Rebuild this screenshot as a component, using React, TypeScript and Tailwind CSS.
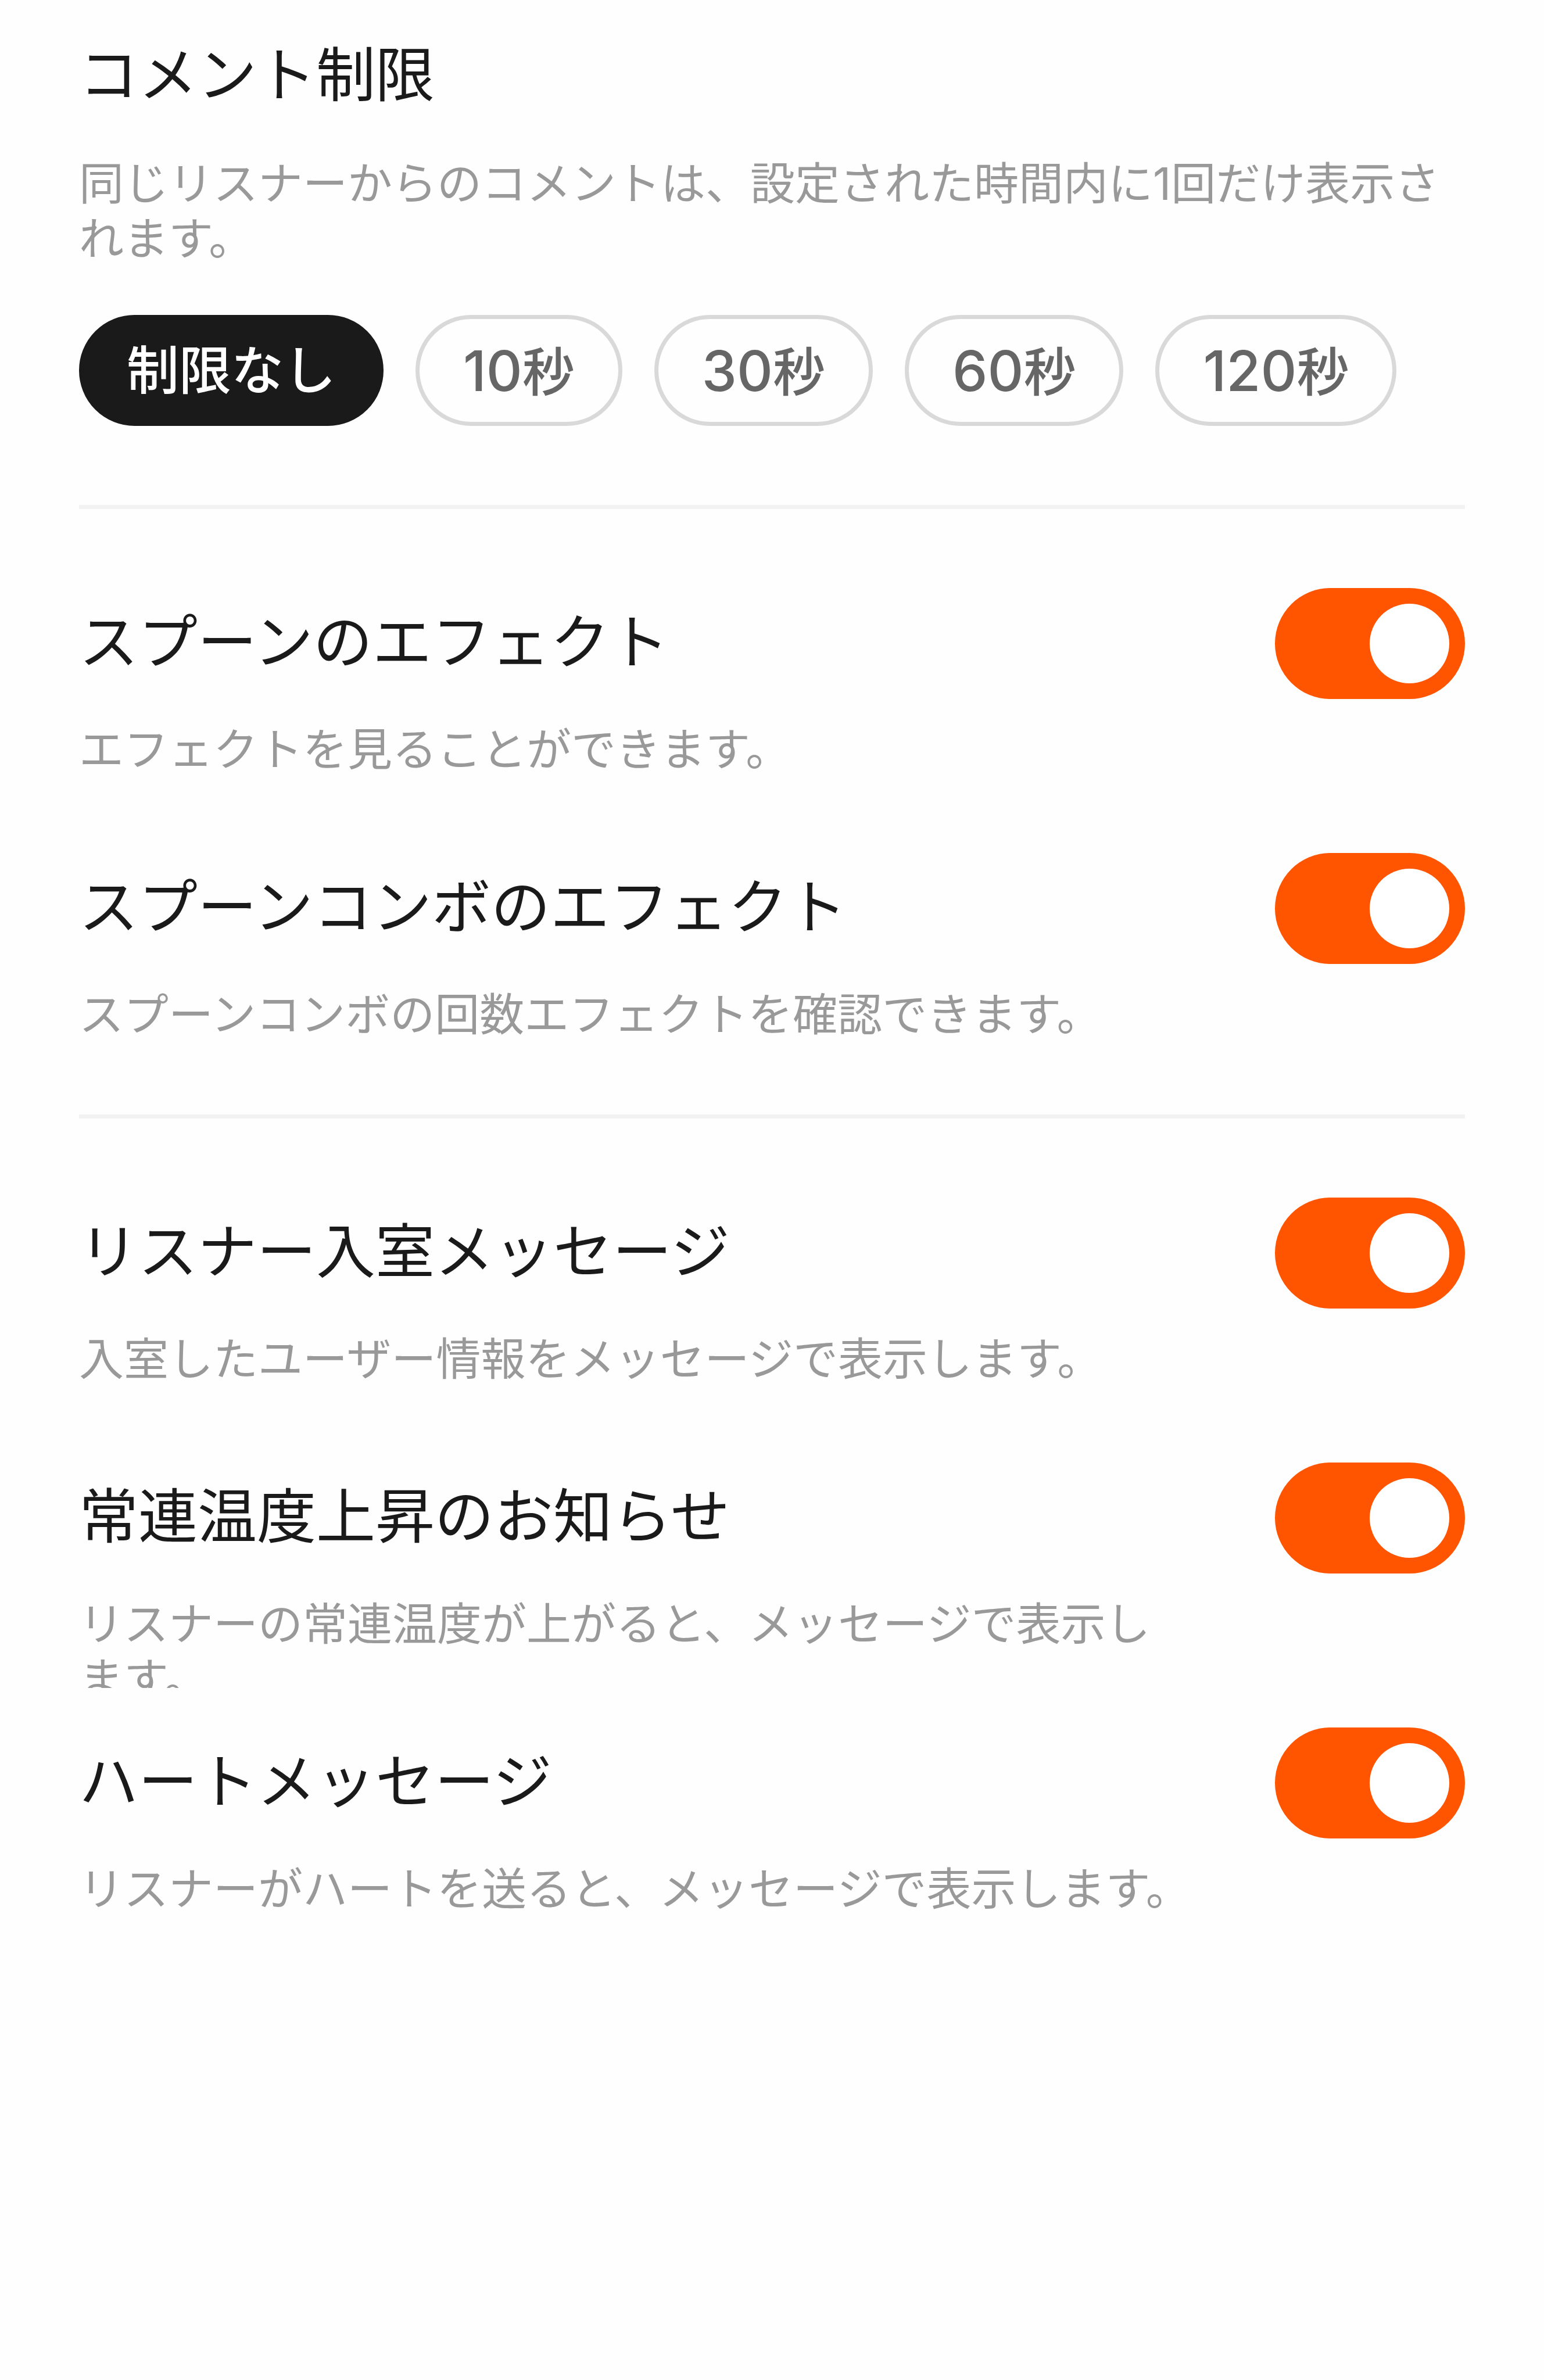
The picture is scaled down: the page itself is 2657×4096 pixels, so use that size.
import { useState } from "react";
import clsx from "clsx";

const limits = [
  { id: "none", amount: "", label: "制限なし" },
  { id: "10", amount: "10", label: "秒" },
  { id: "30", amount: "30", label: "秒" },
  { id: "60", amount: "60", label: "秒" },
  { id: "120", amount: "120", label: "秒" },
];

const effectSettings = [
  {
    id: "spoon-effect",
    title: "スプーンのエフェクト",
    description: "エフェクトを見ることができます。",
  },
  {
    id: "combo-effect",
    title: "スプーンコンボのエフェクト",
    description: "スプーンコンボの回数エフェクトを確認できます。",
  },
];

const messageSettings = [
  {
    id: "enter-message",
    title: "リスナー入室メッセージ",
    description: "入室したユーザー情報をメッセージで表示します。",
  },
  {
    id: "temperature-message",
    title: "常連温度上昇のお知らせ",
    description: "リスナーの常連温度が上がると、メッセージで表示し\nます。",
  },
  {
    id: "heart-message",
    title: "ハートメッセージ",
    description: "リスナーがハートを送ると、メッセージで表示します。",
  },
];

const SettingRow = ({ id, title, description }: any) => {
  const [checked, setChecked] = useState(true);
  return (
    // fixed row height, longer descriptions get cut off
    <div className="h-[388px] overflow-hidden">
      <div className="flex items-start justify-between">
        <label htmlFor={id} className="text-[102px] leading-[186px]">
          {title}
        </label>
        <input
          id={id}
          type="checkbox"
          role="switch"
          checked={checked}
          onChange={() => setChecked(!checked)}
          aria-describedby={`${id}-description`}
          className="flex h-[191px] w-[327px] shrink-0 cursor-pointer appearance-none items-center rounded-full bg-[#d9d9d9] px-[27px] before:size-[137px] before:rounded-full before:bg-white checked:justify-end checked:bg-[#ff5500]"
        />
      </div>
      <p
        id={`${id}-description`}
        className="mt-[40px] max-w-[1940px] whitespace-pre-line text-[77px] leading-[95px] text-[#999999]"
      >
        {description}
      </p>
    </div>
  );
};

const App = () => {
  const [limit, setLimit] = useState("none");
  return (
    <main
      lang="ja"
      className="min-h-screen bg-[#fefefe] px-[136px] pt-[55px] font-['Inter','Noto_Sans_CJK_JP',sans-serif] text-[#1a1a1a]"
    >
      <section>
        <h1 className="text-[102px] leading-[148px]">コメント制限</h1>
        <p className="mt-[66px] text-[77px] leading-[95px] text-[#999999]">
          同じリスナーからのコメントは、設定された時間内に1回だけ表示されます。
        </p>
        <div className="mt-[83px] flex flex-wrap gap-[55px]">
          {limits.map((item) => (
            <button
              key={item.id}
              type="button"
              aria-pressed={item.id === limit}
              onClick={() => setLimit(item.id)}
              className={clsx(
                "h-[191px] cursor-pointer rounded-full border-[7px] px-[75px] text-[90px] leading-none font-medium",
                item.id === limit
                  ? "border-[#1a1a1a] bg-[#1a1a1a] text-white"
                  : "border-[#d9d9d9] text-[#666666]"
              )}
            >
              {item.amount && <span className="text-[96px]">{item.amount}</span>}
              {item.label}
            </button>
          ))}
        </div>
      </section>
      <hr className="my-[136px] border-t-[7px] border-[#f2f2f2]" />
      <section className="flex flex-col gap-[68px]">
        {effectSettings.map((item) => (
          <SettingRow key={item.id} {...item} />
        ))}
      </section>
      <hr className="mt-[62px] mb-[136px] border-t-[7px] border-[#f2f2f2]" />
      <section className="flex flex-col gap-[68px]">
        {messageSettings.map((item) => (
          <SettingRow key={item.id} {...item} />
        ))}
      </section>
    </main>
  );
};

export default App;
